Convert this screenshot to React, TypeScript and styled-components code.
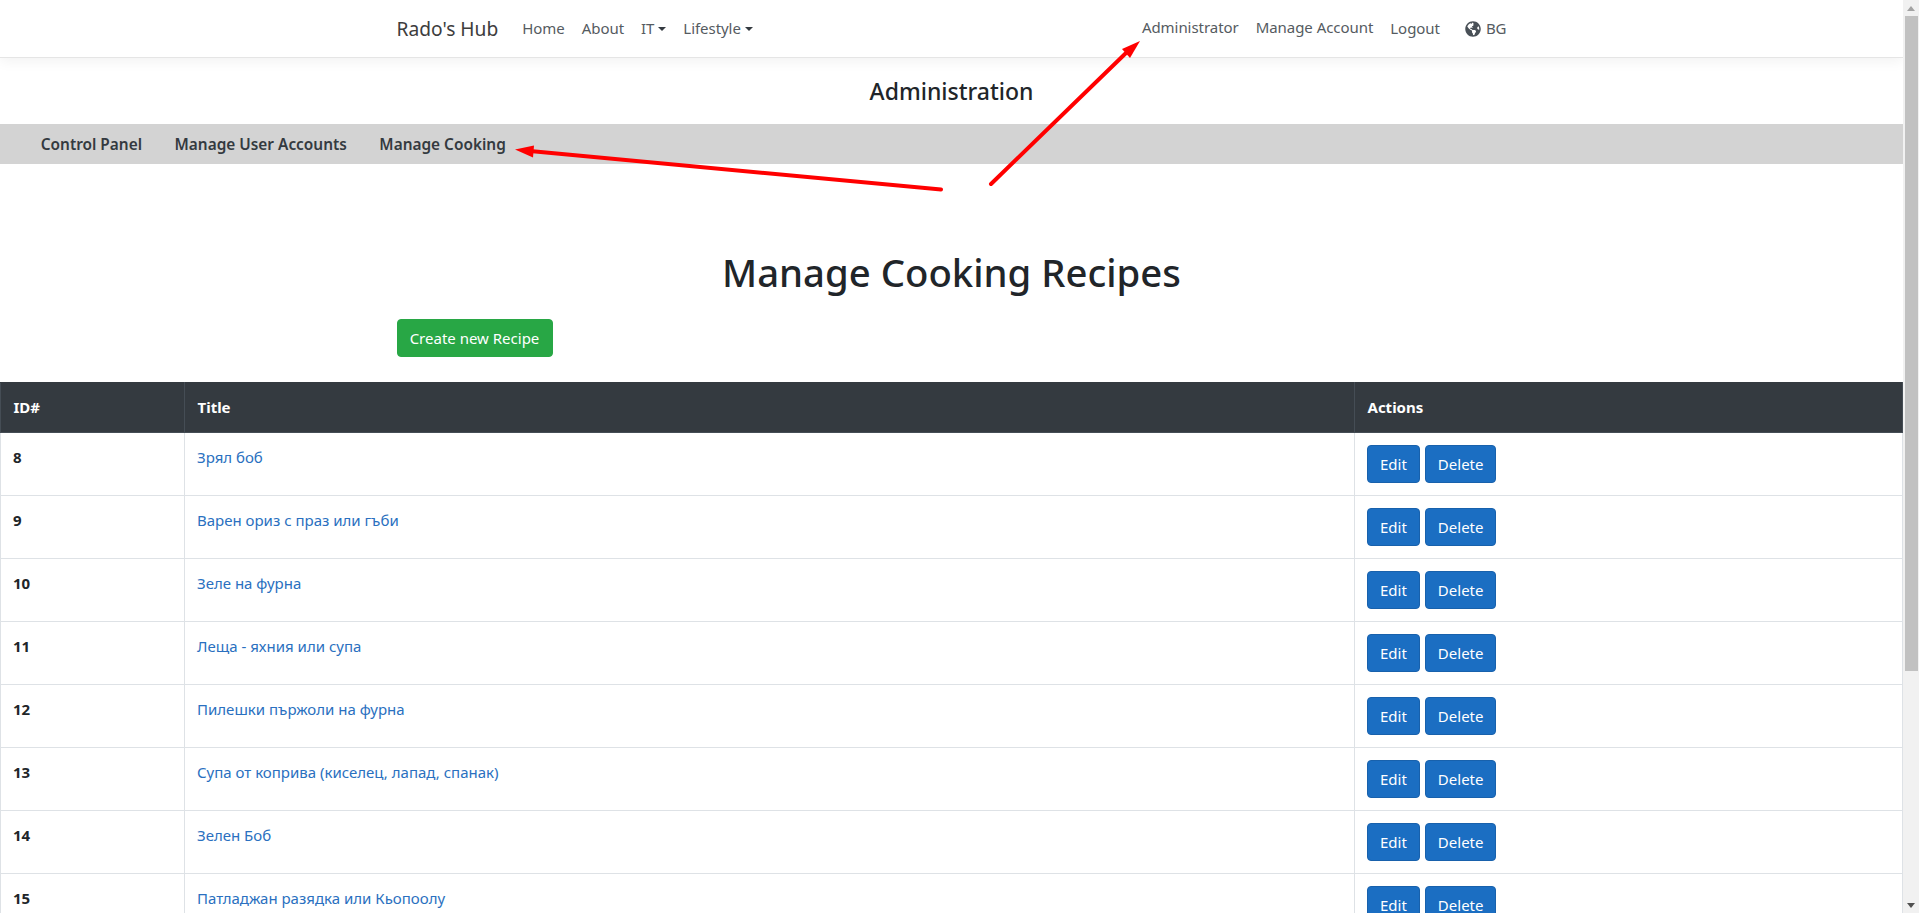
import React from "react";
import styled, { createGlobalStyle } from "styled-components";
import { FaGlobeAmericas } from "react-icons/fa";

const Global = createGlobalStyle`
  html, body { margin: 0; padding: 0; height: 100%; overflow: hidden; background: #fff; }
  body { font-family: "Noto Sans", "Open Sans", "Liberation Sans", sans-serif; font-size: 15px; line-height: 21px; color: #212529; }
  * { box-sizing: border-box; }
`;

const Viewport = styled.div`
  position: relative;
  display: flex;
  width: 100%;
  height: 100vh;
  overflow: hidden;
`;
const Page = styled.main`
  flex: 1;
  min-width: 0;
  height: 100%;
  overflow: hidden;
`;
const Scrollbar = styled.div`
  flex: 0 0 16px;
  display: flex;
  flex-direction: column;
  height: 100%;
  background: #f1f1f1;
`;
const ScrollButton = styled.div`
  flex: 0 0 16px;
  display: flex;
  align-items: center;
  justify-content: center;
`;
const ScrollSpace = styled.div`
  flex: 1;
  padding: 0 1px 0 2px;
`;
const ScrollThumb = styled.div`
  height: 655px;
  background: #c1c1c1;
`;

const Navbar = styled.nav`
  height: 58px;
  background: #fff;
  border-bottom: 1px solid #e5e5e5;
  box-shadow: 0 4px 12px rgba(0, 0, 0, 0.05);
`;
const NavContainer = styled.div`
  width: 1140px;
  height: 100%;
  margin: 0 auto;
  padding: 0 15px;
  display: flex;
  align-items: center;
`;
const Brand = styled.a`
  font-size: 19.2px;
  color: #3d3d3d;
  margin-right: 15.5px;
  white-space: nowrap;
`;
const NavLink = styled.a<{ $gap?: number; $lift?: number }>`
  color: #555b61;
  font-size: 15px;
  letter-spacing: -0.05px;
  padding: 0 8.5px;
  margin-left: ${(p) => p.$gap ?? 0}px;
  display: inline-flex;
  align-items: center;
  white-space: nowrap;
  transform: translateY(${(p) => p.$lift ?? 0}px);
`;
const Caret = styled.span`
  display: inline-block;
  margin-left: 4px;
  border-top: 4.5px solid #343a40;
  border-left: 4.5px solid transparent;
  border-right: 4.5px solid transparent;
`;
const Spacer = styled.div`
  flex: 1;
`;
const Globe = styled(FaGlobeAmericas)`
  font-size: 16px;
  margin-right: 5px;
  color: #495057;
`;
const LastLink = styled(NavLink)`
  padding-right: 0;
`;

const AdminTitle = styled.h4`
  margin: 0;
  height: 66px;
  display: flex;
  align-items: center;
  justify-content: center;
  font-size: 23px;
  font-weight: 500;
`;
const SubNav = styled.div`
  height: 40px;
  background: #d3d3d3;
  padding-left: 24.5px;
  display: flex;
  align-items: center;
`;
const SubLink = styled.a`
  padding: 0 16.25px;
  font-weight: 600;
  font-size: 15.4px;
  color: #343a40;
  white-space: nowrap;
`;
const PageTitle = styled.h1`
  margin: 84px 0 23px;
  font-size: 38.3px;
  line-height: 48px;
  font-weight: 500;
  text-align: center;
`;
const ActionRow = styled.div`
  width: 1140px;
  margin: 0 auto 25px;
  padding: 0 15px;
`;
const Button = styled.button<{ $tone: "green" | "blue" }>`
  height: 38px;
  border: 1px solid ${(p) => (p.$tone === "green" ? "#28a745" : "#1861ac")};
  background: ${(p) => (p.$tone === "green" ? "#28a745" : "#1b6ec2")};
  color: #fff;
  border-radius: 4px;
  padding: 0 12px;
  font: inherit;
  font-size: 15px;
`;
const CreateButton = styled(Button)`
  width: 156px;
  padding: 0;
`;
const Table = styled.table`
  width: 100%;
  border-collapse: collapse;
  table-layout: fixed;
`;
const HeadCell = styled.th`
  background: #343a40;
  color: #fff;
  border: 1px solid #454d55;
  border-top-color: #343a40;
  height: 50px;
  padding: 12px 12px 12px 12.5px;
  text-align: left;
  font-weight: 700;
  font-size: 15px;
`;
const Cell = styled.td`
  border: 1px solid #dee2e6;
  padding: 12px;
  vertical-align: top;
  height: 63px;
`;
const IdCell = styled(Cell)`
  font-weight: 700;
  padding-top: 14px;
`;
const TitleCell = styled(Cell)`
  padding-top: 14px;
`;
const TitleLink = styled.a`
  color: #2a70c0;
`;
const ActionGroup = styled.div`
  display: flex;
  gap: 5px;
`;
const Annotations = styled.svg`
  position: absolute;
  left: 0;
  top: 0;
  width: 1919px;
  height: 913px;
  pointer-events: none;
`;

const recipes = [
  [8, "Зрял боб"],
  [9, "Варен ориз с праз или гъби"],
  [10, "Зеле на фурна"],
  [11, "Леща - яхния или супа"],
  [12, "Пилешки пържоли на фурна"],
  [13, "Супа от коприва (киселец, лапад, спанак)"],
  [14, "Зелен Боб"],
  [15, "Патладжан разядка или Кьопоолу"],
] as const;

export default function App() {
  return (
    <Viewport>
      <Global />
      <Page>
        <Navbar>
          <NavContainer>
            <Brand>Rado's Hub</Brand>
            <NavLink>Home</NavLink>
            <NavLink>About</NavLink>
            <NavLink>IT<Caret /></NavLink>
            <NavLink>Lifestyle<Caret /></NavLink>
            <Spacer />
            <NavLink $lift={-1}>Administrator</NavLink>
            <NavLink $lift={-1}>Manage Account</NavLink>
            <NavLink>Logout</NavLink>
            <LastLink $gap={8}><Globe />BG</LastLink>
          </NavContainer>
        </Navbar>
        <AdminTitle>Administration</AdminTitle>
        <SubNav>
          <SubLink>Control Panel</SubLink>
          <SubLink>Manage User Accounts</SubLink>
          <SubLink>Manage Cooking</SubLink>
        </SubNav>
        <PageTitle>Manage Cooking Recipes</PageTitle>
        <ActionRow>
          <CreateButton $tone="green">Create new Recipe</CreateButton>
        </ActionRow>
        <Table>
          <colgroup>
            <col style={{ width: 184 }} />
            <col style={{ width: 1170 }} />
            <col />
          </colgroup>
          <thead>
            <tr>
              <HeadCell>ID#</HeadCell>
              <HeadCell>Title</HeadCell>
              <HeadCell>Actions</HeadCell>
            </tr>
          </thead>
          <tbody>
            {recipes.map(([id, title]) => (
              <tr key={id}>
                <IdCell>{id}</IdCell>
                <TitleCell><TitleLink>{title}</TitleLink></TitleCell>
                <Cell>
                  <ActionGroup>
                    <Button $tone="blue">Edit</Button>
                    <Button $tone="blue">Delete</Button>
                  </ActionGroup>
                </Cell>
              </tr>
            ))}
          </tbody>
        </Table>
      </Page>
      <Scrollbar>
        <ScrollButton>
          <svg width="8" height="5" viewBox="0 0 8 5"><path d="M4 0 8 5H0z" fill="#a3a3a3" /></svg>
        </ScrollButton>
        <ScrollSpace><ScrollThumb /></ScrollSpace>
        <ScrollButton>
          <svg width="8" height="5" viewBox="0 0 8 5"><path d="M0 0h8L4 5z" fill="#505050" /></svg>
        </ScrollButton>
      </Scrollbar>
      <Annotations viewBox="0 0 1919 913">
        <line x1="941" y1="189.5" x2="530" y2="151" stroke="#f00" strokeWidth="4" strokeLinecap="round" />
        <path d="M515 149.5 534 145.5 533 157.5z" fill="#f00" />
        <line x1="991" y1="184" x2="1126" y2="53" stroke="#f00" strokeWidth="4" strokeLinecap="round" />
        <path d="M1140 41 1122 49 1130 58z" fill="#f00" />
      </Annotations>
    </Viewport>
  );
}
